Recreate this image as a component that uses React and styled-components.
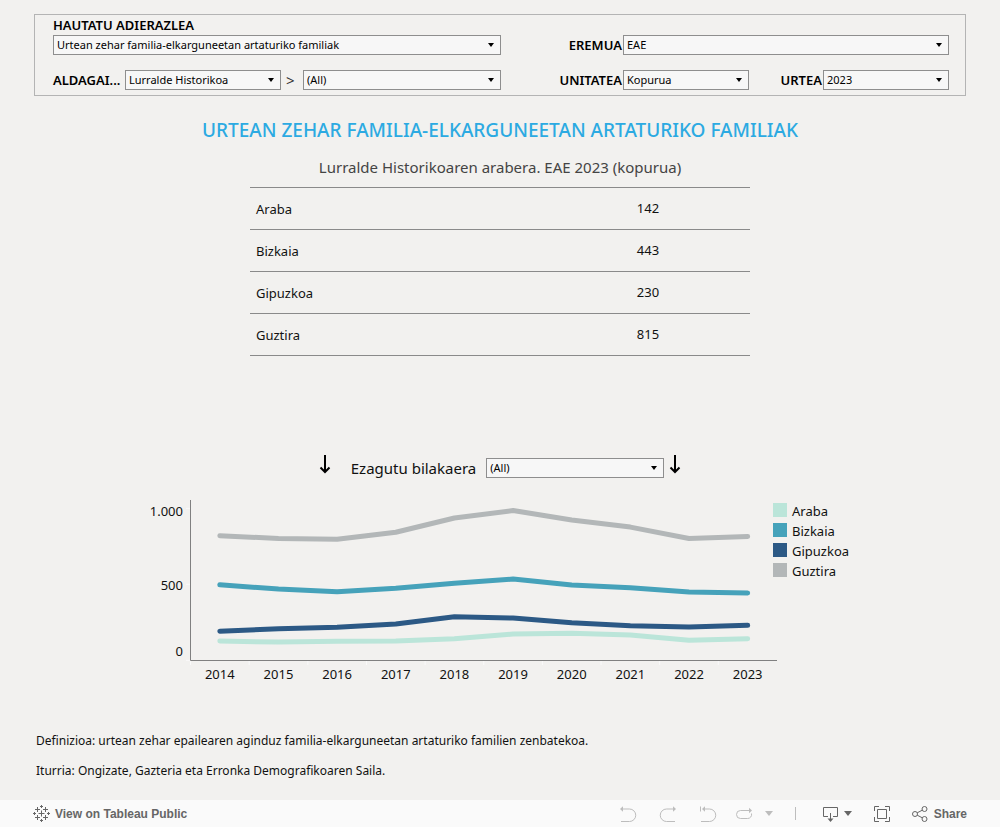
import React from "react";
import styled, { createGlobalStyle } from "styled-components";

const GlobalStyle = createGlobalStyle`
  *, *::before, *::after { box-sizing: border-box; }
  body { margin: 0; background: #f2f1ef; }
`;

const Page = styled.div`
  display: flex;
  flex-direction: column;
  min-height: 100vh;
  background: #f2f1ef;
  color: #111;
  font-family: "Noto Sans", "Open Sans", sans-serif;
`;

const Main = styled.main`
  flex: 1;
  display: flex;
  flex-direction: column;
  padding: 14px 34px 0;
`;

const Filters = styled.form`
  display: grid;
  grid-template-columns: 448fr 408fr;
  column-gap: 40px;
  row-gap: 15px;
  align-items: end;
  padding: 2px 16px 5px 18px;
  border: 1px solid #b4b4b4;
`;

const LabelledField = styled.div`
  display: flex;
  flex-direction: column;
  gap: 1px;
`;

const FieldRow = styled.div`
  display: flex;
  align-items: center;
`;

const FieldLabel = styled.label`
  flex: none;
  width: ${(p) => p.$width || "auto"};
  padding-right: ${(p) => (p.$end ? "1px" : "0")};
  text-align: ${(p) => (p.$end ? "right" : "left")};
  font-size: 13px;
  font-weight: 600;
  line-height: 17px;
  color: #000;
  white-space: nowrap;
`;

const Separator = styled.span`
  flex: none;
  width: 22px;
  padding-left: 5px;
  font-size: 15px;
  line-height: 20px;
  color: #333;
`;

const SelectBox = styled.span`
  position: relative;
  display: flex;
  flex: ${(p) => p.$grow || 1} 1 0;
  min-width: 0;
  height: 20px;

  &::after {
    content: "";
    position: absolute;
    right: 7px;
    top: 8px;
    border: 3px solid transparent;
    border-top: 4px solid #000;
    border-bottom: 0;
    pointer-events: none;
  }
`;

const SelectControl = styled.select`
  appearance: none;
  width: 100%;
  height: 20px;
  margin: 0;
  padding: 0 18px 0 3px;
  border: 1px solid #8e8e8e;
  border-radius: 0;
  background: #f7f7f7;
  color: #000;
  font-family: inherit;
  font-size: 11px;
  line-height: 18px;
`;

const Title = styled.h1`
  margin: 21px 0 0;
  text-align: center;
  font-size: 19px;
  font-weight: 500;
  line-height: 26px;
  color: #2caae2;
`;

const Subtitle = styled.h2`
  margin: 14px 0 0;
  text-align: center;
  font-size: 15px;
  font-weight: 400;
  line-height: 20px;
  color: #444;
`;

const DataTable = styled.table`
  width: 500px;
  max-width: 100%;
  margin: 10px auto 0;
  border-collapse: collapse;
  font-size: 13px;
`;

const Row = styled.tr`
  height: 42px;
  border-top: 1px solid #8a8a8a;
  border-bottom: 1px solid #8a8a8a;
`;

const RowName = styled.th`
  width: 60%;
  padding: 0 6px;
  text-align: left;
  font-weight: 400;
`;

const RowValue = styled.td`
  width: 40%;
  padding: 0 4px 2px 0;
  text-align: center;
`;

const Evolution = styled.div`
  display: flex;
  align-items: center;
  justify-content: center;
  gap: 5px;
  margin-top: 98px;
`;

const EvolutionLabel = styled.label`
  margin-left: 15px;
  padding-right: 5px;
  font-size: 15px;
  line-height: 24px;
`;

const EvolutionSelect = styled.div`
  display: flex;
  width: 178px;
`;

const ChartRow = styled.section`
  display: flex;
  width: 720px;
  max-width: 100%;
  margin: 8px auto 0;
`;

const ChartSvg = styled.svg`
  flex: 1 1 0;
  min-width: 0;
  overflow: visible;
  font-size: 13px;
  fill: #111;
`;

const Legend = styled.ul`
  flex: none;
  width: 87px;
  margin: 0;
  padding: 11px 0 0;
  list-style: none;
`;

const LegendItem = styled.li`
  display: flex;
  align-items: center;
  gap: 5px;
  height: 20px;
  font-size: 13px;

  &::before {
    content: "";
    width: 14px;
    height: 14px;
    margin-bottom: 2px;
    background: ${(p) => p.$color};
  }
`;

const Notes = styled.div`
  display: flex;
  flex-direction: column;
  gap: 12px;
  margin: 42px 2px 20px;
`;

const Note = styled.p`
  margin: 0;
  font-size: 12px;
  line-height: 18px;
`;

const Toolbar = styled.footer`
  display: flex;
  align-items: center;
  justify-content: space-between;
  height: 27px;
  padding: 0 33px;
  background: #fafafa;
  font-family: "Liberation Sans", Arial, sans-serif;
  color: #666;
`;

const ToolGroup = styled.div`
  display: flex;
  align-items: center;
  gap: 22px;
`;

const ToolLink = styled.a`
  display: flex;
  align-items: center;
  gap: 5px;
  color: inherit;
  font-size: 12px;
  font-weight: 700;
  text-decoration: none;
`;

const ToolButton = styled.button`
  display: flex;
  align-items: center;
  gap: ${(p) => p.$gap || "5px"};
  margin: 0;
  margin-left: ${(p) => p.$pull || "0"};
  padding: 0;
  border: 0;
  background: none;
  color: ${(p) => (p.disabled ? "#bdbdbd" : "#666")};
  font-family: inherit;
  font-size: 12px;
  font-weight: 700;
`;

const Divider = styled.span`
  width: 1px;
  height: 13px;
  margin-right: 5px;
  background: #bdbdbd;
`;

const Icon = styled.svg`
  display: block;
  flex: none;
  fill: none;
  stroke: currentColor;
`;

const ArrowIcon = styled(Icon)`
  margin-bottom: 8px;
`;

function Dropdown({ id, value, grow }) {
  return (
    <SelectBox $grow={grow}>
      <SelectControl id={id} defaultValue={value}>
        <option>{value}</option>
      </SelectControl>
    </SelectBox>
  );
}

function DownArrow() {
  return (
    <ArrowIcon width="12" height="20" viewBox="0 0 12 20" aria-hidden="true">
      <path d="M6 1V18M1.5 13.5L6 18L10.5 13.5" strokeWidth="2" stroke="#000" />
    </ArrowIcon>
  );
}

const YEARS = [2014, 2015, 2016, 2017, 2018, 2019, 2020, 2021, 2022, 2023];

const SERIES = [
  { name: "Araba", color: "#bbe5d9", values: [127, 120, 125, 127, 142, 173, 178, 167, 132, 142] },
  { name: "Bizkaia", color: "#46a2ba", values: [497, 469, 452, 474, 507, 535, 496, 478, 450, 443] },
  { name: "Gipuzkoa", color: "#2c5985", values: [192, 208, 217, 239, 286, 278, 247, 228, 219, 230] },
  { name: "Guztira", color: "#b3b7b8", values: [820, 802, 797, 843, 937, 986, 924, 877, 802, 815] },
];

const PLOT = { left: 50.5, right: 637, top: 10, bottom: 170.5 };
const STEP = (PLOT.right - PLOT.left) / YEARS.length;
const xAt = (i) => PLOT.left + STEP * (i + 0.5);
const yAt = (v) => 170.3 - v * 0.1519;

const Y_LABELS = [
  { text: "1.000", value: 1000, y: 26 },
  { text: "500", value: 500, y: 100 },
  { text: "0", value: 0, y: 166 },
];

function LineChart() {
  return (
    <ChartSvg viewBox="0 0 633 200" role="img" aria-label="Bilakaera 2014-2023">
      <g stroke="#fafafa">
        {Y_LABELS.map((t) => (
          <line key={t.text} x1="46" x2="50" y1={yAt(t.value)} y2={yAt(t.value)} />
        ))}
        {YEARS.map((year, i) => (
          <line key={year} x1={PLOT.left + STEP * i} x2={PLOT.left + STEP * i} y1="171" y2="175" />
        ))}
      </g>
      <path
        d={`M${PLOT.left} ${PLOT.top}V${PLOT.bottom}H${PLOT.right}`}
        fill="none"
        stroke="#808080"
      />
      {SERIES.map((s) => (
        <polyline
          key={s.name}
          points={s.values.map((v, i) => `${xAt(i)},${yAt(v)}`).join(" ")}
          fill="none"
          stroke={s.color}
          strokeWidth="5"
          strokeLinecap="round"
          strokeLinejoin="round"
        />
      ))}
      {Y_LABELS.map((t) => (
        <text key={t.text} x="43" y={t.y} textAnchor="end">{t.text}</text>
      ))}
      {YEARS.map((year, i) => (
        <text key={year} x={xAt(i)} y="189" textAnchor="middle">{year}</text>
      ))}
    </ChartSvg>
  );
}

const TABLE = [
  ["Araba", "142"],
  ["Bizkaia", "443"],
  ["Gipuzkoa", "230"],
  ["Guztira", "815"],
];

function TableauMark() {
  return (
    <Icon width="17" height="17" viewBox="0 0 17 17" aria-hidden="true">
      <path
        strokeWidth="1"
        d="M8.5 5.5v6M5.5 8.5h6M8.5 0v3M7 1.5h3M8.5 14v3M7 15.5h3M1.5 7v3M0 8.5h3M15.5 7v3M14 8.5h3M4.5 2v5M2 4.5h5M12.5 2v5M10 4.5h5M4.5 10v5M2 12.5h5M12.5 10v5M10 12.5h5"
      />
    </Icon>
  );
}

function UndoIcon() {
  return (
    <Icon width="18" height="18" viewBox="0 0 18 18" aria-hidden="true">
      <path d="M3 4H10.5A6.25 6.25 0 0 1 10.5 16.5H2" />
      <path d="M1 4L4 1.2V6.8Z" fill="currentColor" stroke="none" />
    </Icon>
  );
}

function RedoIcon() {
  return (
    <Icon width="18" height="18" viewBox="0 0 18 18" aria-hidden="true">
      <path d="M15 4H7.5A6.25 6.25 0 0 0 7.5 16.5H16" />
      <path d="M17 4L14 1.2V6.8Z" fill="currentColor" stroke="none" />
    </Icon>
  );
}

function RevertIcon() {
  return (
    <Icon width="18" height="18" viewBox="0 0 18 18" aria-hidden="true">
      <path d="M1.5 1.5V6.5M5 4H10.5A6.25 6.25 0 0 1 10.5 16.5H2" />
      <path d="M3 4L6 1.2V6.8Z" fill="currentColor" stroke="none" />
    </Icon>
  );
}

function RefreshIcon() {
  return (
    <Icon width="18" height="18" viewBox="0 0 18 18" aria-hidden="true">
      <path d="M14 5.5H5.5A4 4 0 0 0 5.5 13.5H12.5A4 4 0 0 0 16.5 8.5" />
      <path d="M17 5.5L14 2.7V8.3Z" fill="currentColor" stroke="none" />
    </Icon>
  );
}

function Caret() {
  return (
    <Icon width="8" height="5" viewBox="0 0 8 5" aria-hidden="true">
      <path d="M0 0H8L4 5Z" fill="currentColor" stroke="none" />
    </Icon>
  );
}

function DownloadIcon() {
  return (
    <Icon width="16" height="18" viewBox="0 0 16 18" aria-hidden="true">
      <path d="M5 11.5H0.5V2.5H14.5V11.5H10M7.5 8V15" />
      <path d="M4.5 13.5H10.5L7.5 17Z" fill="currentColor" stroke="none" />
    </Icon>
  );
}

function FullscreenIcon() {
  return (
    <Icon width="16" height="18" viewBox="0 0 16 18" aria-hidden="true">
      <path d="M0.5 6V1.5H5M11 1.5H15.5V6M15.5 12V16.5H11M5 16.5H0.5V12M3.5 4.5H12.5V13.5H3.5Z" />
    </Icon>
  );
}

function ShareIcon() {
  return (
    <Icon width="16" height="18" viewBox="0 0 16 18" aria-hidden="true">
      <circle cx="3" cy="9" r="2.5" />
      <circle cx="12.5" cy="4" r="2.5" />
      <circle cx="12.5" cy="14" r="2.5" />
      <path d="M5.2 7.8L10.3 5.2M5.2 10.2L10.3 12.8" />
    </Icon>
  );
}

export default function App() {
  return (
    <Page>
      <GlobalStyle />
      <Main>
        <Filters>
          <LabelledField>
            <FieldLabel htmlFor="indicator">HAUTATU ADIERAZLEA</FieldLabel>
            <FieldRow>
              <Dropdown id="indicator" value="Urtean zehar familia-elkarguneetan artaturiko familiak" />
            </FieldRow>
          </LabelledField>
          <FieldRow>
            <FieldLabel htmlFor="area" $width="82px" $end>EREMUA</FieldLabel>
            <Dropdown id="area" value="EAE" />
          </FieldRow>
          <FieldRow>
            <FieldLabel htmlFor="variable" $width="72px">ALDAGAI...</FieldLabel>
            <Dropdown id="variable" value="Lurralde Historikoa" grow={156} />
            <Separator>&gt;</Separator>
            <Dropdown id="category" value="(All)" grow={198} />
          </FieldRow>
          <FieldRow>
            <FieldLabel htmlFor="unit" $width="82px" $end>UNITATEA</FieldLabel>
            <Dropdown id="unit" value="Kopurua" />
            <FieldLabel htmlFor="year" $width="74px" $end>URTEA</FieldLabel>
            <Dropdown id="year" value="2023" />
          </FieldRow>
        </Filters>

        <Title>URTEAN ZEHAR FAMILIA-ELKARGUNEETAN ARTATURIKO FAMILIAK</Title>
        <Subtitle>Lurralde Historikoaren arabera. EAE 2023 (kopurua)</Subtitle>

        <DataTable>
          <tbody>
            {TABLE.map(([name, value]) => (
              <Row key={name}>
                <RowName scope="row">{name}</RowName>
                <RowValue>{value}</RowValue>
              </Row>
            ))}
          </tbody>
        </DataTable>

        <Evolution>
          <DownArrow />
          <EvolutionLabel htmlFor="evolution">Ezagutu bilakaera</EvolutionLabel>
          <EvolutionSelect>
            <Dropdown id="evolution" value="(All)" />
          </EvolutionSelect>
          <DownArrow />
        </Evolution>

        <ChartRow>
          <LineChart />
          <Legend>
            {SERIES.map((s) => (
              <LegendItem key={s.name} $color={s.color}>{s.name}</LegendItem>
            ))}
          </Legend>
        </ChartRow>

        <Notes>
          <Note>
            Definizioa: urtean zehar epailearen aginduz familia-elkarguneetan artaturiko familien zenbatekoa.
          </Note>
          <Note>Iturria: Ongizate, Gazteria eta Erronka Demografikoaren Saila.</Note>
        </Notes>
      </Main>

      <Toolbar>
        <ToolLink href="#tableau">
          <TableauMark />
          View on Tableau Public
        </ToolLink>
        <ToolGroup>
          <ToolButton type="button" aria-label="Undo" disabled><UndoIcon /></ToolButton>
          <ToolButton type="button" aria-label="Redo" disabled><RedoIcon /></ToolButton>
          <ToolButton type="button" aria-label="Revert" disabled><RevertIcon /></ToolButton>
          <ToolButton type="button" aria-label="Refresh" $pull="-4px" disabled><RefreshIcon /></ToolButton>
          <ToolButton type="button" aria-label="Pause" $pull="-10px" disabled><Caret /></ToolButton>
          <Divider />
          <ToolButton type="button" aria-label="Download"><DownloadIcon /><Caret /></ToolButton>
          <ToolButton type="button" aria-label="Full screen"><FullscreenIcon /></ToolButton>
          <ToolButton type="button" $gap="6px"><ShareIcon />Share</ToolButton>
        </ToolGroup>
      </Toolbar>
    </Page>
  );
}
